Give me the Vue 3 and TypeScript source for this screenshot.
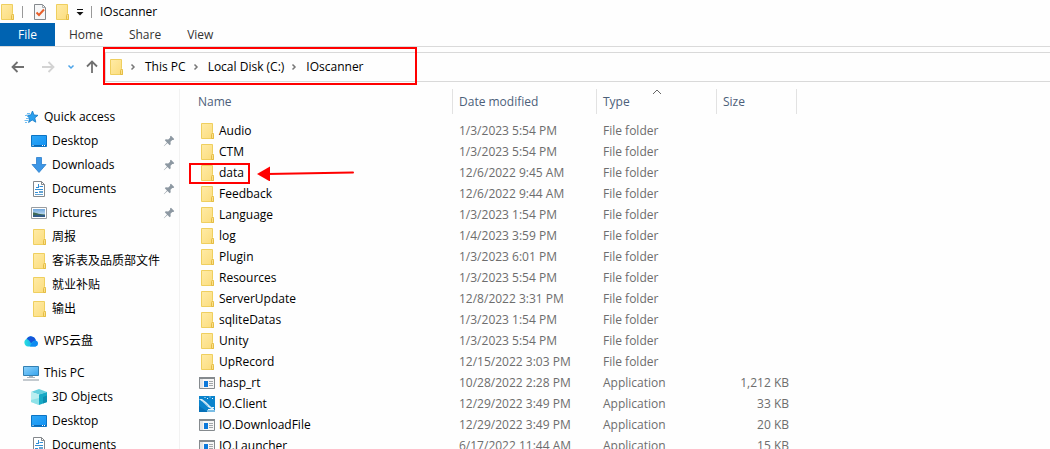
<script setup lang="ts">
interface SideItem {
  label: string
  icon: string
  level: 1 | 2
  pinned?: boolean
  gap?: boolean
}

interface FileRow {
  name: string
  date: string
  type: string
  size?: string
  icon: string
  marked?: boolean
}

const tabs: string[] = ['Home', 'Share', 'View']
const crumbs: string[] = ['This PC', 'Local Disk (C:)', 'IOscanner']

const sideItems: SideItem[] = [
  { label: 'Quick access', icon: 'star', level: 1 },
  { label: 'Desktop', icon: 'desktop', level: 2, pinned: true },
  { label: 'Downloads', icon: 'download', level: 2, pinned: true },
  { label: 'Documents', icon: 'document', level: 2, pinned: true },
  { label: 'Pictures', icon: 'picture', level: 2, pinned: true },
  { label: '周报', icon: 'folder', level: 2 },
  { label: '客诉表及品质部文件', icon: 'folder', level: 2 },
  { label: '就业补贴', icon: 'folder', level: 2 },
  { label: '输出', icon: 'folder', level: 2 },
  { label: 'WPS云盘', icon: 'cloud', level: 1, gap: true },
  { label: 'This PC', icon: 'pc', level: 1, gap: true },
  { label: '3D Objects', icon: 'cube', level: 2 },
  { label: 'Desktop', icon: 'desktop', level: 2 },
  { label: 'Documents', icon: 'document', level: 2 },
]

const folder = (name: string, date: string, marked = false): FileRow => ({
  name,
  date,
  type: 'File folder',
  icon: 'folder',
  marked,
})

const program = (name: string, date: string, size: string, icon = 'program'): FileRow => ({
  name,
  date,
  type: 'Application',
  size,
  icon,
})

const files: FileRow[] = [
  folder('Audio', '1/3/2023 5:54 PM'),
  folder('CTM', '1/3/2023 5:54 PM'),
  folder('data', '12/6/2022 9:45 AM', true),
  folder('Feedback', '12/6/2022 9:44 AM'),
  folder('Language', '1/3/2023 1:54 PM'),
  folder('log', '1/4/2023 3:59 PM'),
  folder('Plugin', '1/3/2023 6:01 PM'),
  folder('Resources', '1/3/2023 5:54 PM'),
  folder('ServerUpdate', '12/8/2022 3:31 PM'),
  folder('sqliteDatas', '1/3/2023 1:54 PM'),
  folder('Unity', '1/3/2023 5:54 PM'),
  folder('UpRecord', '12/15/2022 3:03 PM'),
  program('hasp_rt', '10/28/2022 2:28 PM', '1,212 KB'),
  program('IO.Client', '12/29/2022 3:49 PM', '33 KB', 'scanner'),
  program('IO.DownloadFile', '12/29/2022 3:49 PM', '20 KB'),
  program('IO.Launcher', '6/17/2022 11:44 AM', '15 KB'),
]
</script>

<template>
  <div class="explorer">
    <svg class="sprite" aria-hidden="true">
      <defs>
        <linearGradient id="g-folder" x1="0" y1="0" x2="1" y2="1">
          <stop offset="0" stop-color="#ffeba6" />
          <stop offset="1" stop-color="#fbdc7c" />
        </linearGradient>
        <linearGradient id="g-blue" x1="0" y1="0" x2="1" y2="1">
          <stop offset="0" stop-color="#2fa8f7" />
          <stop offset="1" stop-color="#1292f4" />
        </linearGradient>
        <linearGradient id="g-pc" x1="0" y1="0" x2="1" y2="1">
          <stop offset="0" stop-color="#8fd2fb" />
          <stop offset="1" stop-color="#35a4ee" />
        </linearGradient>
        <linearGradient id="g-sky" x1="0" y1="0" x2="0" y2="1">
          <stop offset="0" stop-color="#6fa6dc" />
          <stop offset="1" stop-color="#e3f1fa" />
        </linearGradient>
        <linearGradient id="g-cloud" x1="0" y1="0" x2="1" y2="0">
          <stop offset="0" stop-color="#27dfe0" />
          <stop offset="1" stop-color="#128ef5" />
        </linearGradient>
      </defs>
      <symbol id="folder" viewBox="0 0 16 16">
        <path d="M2.5.5h11v9l1 1v5h-12z" fill="url(#g-folder)" stroke="#efcf5f" />
        <path d="M12.500 15.500v-4l1-1.500 1 1.500v4z" fill="#fbe08a" stroke="#e5bd45" />
      </symbol>
      <symbol id="check-doc" viewBox="0 0 16 16">
        <path d="M2.500.5h8l3 3v12h-11z" fill="#f6f7f8" stroke="#85898d" />
        <path d="M10.500.5v3h3" fill="none" stroke="#a5a9ad" />
        <path d="M4.500 8.500 7 11l5-5.500" fill="none" stroke="#e8602c" stroke-width="2" />
      </symbol>
      <symbol id="star" viewBox="0 0 16 16">
        <path d="m9.500 2 1.500 4 4 .3-3.200 2.600 1 4.300-3.600-2.200-3.600 2.500 1-4.300L3.700 6.300l4-.3z" fill="#2ba0ee" stroke="#1478c4" stroke-width=".8" />
        <path d="M4 4.500h3M2 6.500h3M3 9.500h3M1.500 11.500H5M2 13.500h2" stroke="#6fbdf2" />
      </symbol>
      <symbol id="desktop" viewBox="0 0 16 16">
        <path d="M.5 2.500h15v11H.5z" fill="url(#g-blue)" stroke="#0c74c4" />
        <path d="M1 12.500h14" stroke="#0b66b3" />
        <path d="M1.500 12.500h1M11 12.500h1M13 12.500h1" stroke="#fff" />
      </symbol>
      <symbol id="download" viewBox="0 0 16 16">
        <path d="M5.500.5h5v7h4.500L8 15.500 1 7.500h4.500z" fill="#3c96e6" stroke="#2a7dcc" stroke-width=".8" />
      </symbol>
      <symbol id="document" viewBox="0 0 16 16">
        <path d="M2.500.5h8l3 3v12h-11z" fill="#fff" stroke="#84888c" />
        <path d="M10.500.5v3h3" fill="none" stroke="#84888c" />
        <path d="M5 6.500h2M7.500 3v4M8.500 5.500H12M4 8.500h8M4 11.500h3" stroke="#338ed4" />
        <path d="M8 10h4v2H8zM4 13h8v1H4z" fill="#65a4d3" />
      </symbol>
      <symbol id="picture" viewBox="0 0 16 16">
        <path d="M.5 2.500h15v11H.5z" fill="#fff" stroke="#989ca0" />
        <path d="M2 4h12v8H2z" fill="url(#g-sky)" />
        <path d="M2 7.500c3 0 4 1.500 12 2V12H2z" fill="#3e6956" />
        <path d="M2 10.500c4-1 8 0 12-.5v2H2z" fill="#315a88" />
      </symbol>
      <symbol id="cloud" viewBox="0 0 16 16">
        <path d="M5 13.500a4 4 0 0 1-1.500-7.500 5 5 0 0 1 9.300 1.400 3.200 3.200 0 0 1-.3 6.100z" fill="url(#g-cloud)" />
        <path d="M3.500 6a5 5 0 0 1 9.300 1.400C10.500 7.500 9 8.800 8 10.500 7 8 5.500 6.200 3.500 6z" fill="#1554d9" />
        <path d="M7 13.500c1-3 3-5.500 5.800-6.100a3.200 3.200 0 0 1-.3 6.100z" fill="#0d8bf1" />
      </symbol>
      <symbol id="pc" viewBox="0 0 16 16">
        <path d="M.5 1.500h15v9H.5z" fill="url(#g-pc)" stroke="#3380b2" />
        <path d="M4 12.500h8M6 11.500h4" stroke="#a8b4bd" />
        <path d="M0 15h16" stroke="#8a969f" />
      </symbol>
      <symbol id="cube" viewBox="0 0 16 16">
        <path d="M8 0 16 3 8 5.500 0 3z" fill="#65d0de" />
        <path d="m0 3 8 2.500V16l-8-3z" fill="#b9eef0" />
        <path d="m16 3-8 2.500V16l8-3z" fill="#16a9c5" />
        <path d="m0 11 8-2V16l-8-3z" fill="#8fe2e8" />
        <path d="m12 8 4-1.500V13l-4 1.500z" fill="#0c8eb0" />
      </symbol>
      <symbol id="program" viewBox="0 0 16 16">
        <path d="M.5 2.500h15v11H.5z" fill="#f6f6f6" stroke="#858a8e" />
        <path d="M0 2h16v2H0z" fill="#858a8e" />
        <path d="M1 4h3v9H1z" fill="#e3e5e6" />
        <path d="M5 6h4v6H5z" fill="#0b78da" />
        <path d="M10 6.500h4M10 8.500h4M10 10.500h4" stroke="#a2a6a9" />
      </symbol>
      <symbol id="scanner" viewBox="0 0 16 16">
        <path d="M0 0h16v16H0z" fill="#0a83cc" />
        <path d="M0 10 9 16H0z" fill="#0670b7" />
        <path d="M0 3l3 0 4 3 4 4 4 3-1 1-5-3-4-4z" fill="#d9edf8" />
        <path d="m3 5 6 5" stroke="#8cc5e6" />
        <path d="M5.500 1.500h1M8 2.500h1M10.500 1h1M13 2.500h1M9 13.500h6M8 15h8M13 11.500h2" stroke="#eaf6fc" />
      </symbol>
      <symbol id="pin" viewBox="0 0 12 12">
        <path d="M7 1.500 8 .8l3.200 3.200-.7 1-1.200-.1-1.800 1.900.2 2.500-1 .9-2.200-2.200L1 11.200.8 11l3.200-3.500L1.800 5.300l.9-1 2.500.2L7.100 2.700z" fill="#8d98a2" />
      </symbol>
      <symbol id="chevron" viewBox="0 0 8 8">
        <path d="m2.500 1.500 2.500 2.500-2.500 2.500" fill="none" stroke="#777" stroke-width="1.500" />
      </symbol>
      <symbol id="arrow" viewBox="0 0 14 14">
        <path d="M13 7H2M6.500 2 1.500 7l5 5" fill="none" stroke="currentColor" stroke-width="1.800" />
      </symbol>
    </svg>

    <header class="title-bar">
      <svg class="icon"><use href="#folder" /></svg>
      <span class="separator first"></span>
      <button class="tool" aria-label="Properties"><svg class="icon"><use href="#check-doc" /></svg></button>
      <button class="tool" aria-label="New folder"><svg class="icon"><use href="#folder" /></svg></button>
      <button class="tool" aria-label="Customize Quick Access Toolbar">
        <svg width="8" height="8" viewBox="0 0 8 8"><path d="M1 1.500h6" stroke="#111" /><path d="M.5 4h7L4 7.500z" fill="#111" /></svg>
      </button>
      <span class="separator"></span>
      <span class="title">IOscanner</span>
    </header>

    <nav class="ribbon" aria-label="Ribbon">
      <button class="tab file">File</button>
      <button v-for="tab in tabs" :key="tab" class="tab">{{ tab }}</button>
    </nav>

    <div class="navigation">
      <div class="history">
        <button class="tool" aria-label="Back"><svg class="arrow"><use href="#arrow" /></svg></button>
        <button class="tool forward" aria-label="Forward"><svg class="arrow flip"><use href="#arrow" /></svg></button>
        <button class="tool recent" aria-label="Recent locations">
          <svg width="8" height="8" viewBox="0 0 8 8"><path d="m1.500 2.500 2.500 2.500 2.500-2.500" fill="none" stroke="#4ba3e8" stroke-width="1.500" /></svg>
        </button>
        <button class="tool up" aria-label="Up"><svg class="arrow turn"><use href="#arrow" /></svg></button>
      </div>
      <div class="address">
        <svg class="icon"><use href="#folder" /></svg>
        <template v-for="crumb in crumbs" :key="crumb">
          <svg class="chevron"><use href="#chevron" /></svg>
          <button class="crumb">{{ crumb }}</button>
        </template>
      </div>
      <div class="address-mark"></div>
    </div>

    <main class="content">
      <aside class="sidebar">
        <ul>
          <li v-for="(item, i) in sideItems" :key="i" :class="['level-' + item.level, item.icon, { gap: item.gap }]">
            <svg class="icon"><use :href="'#' + item.icon" /></svg>
            <a href="#">{{ item.label }}</a>
            <svg v-if="item.pinned" class="pin"><use href="#pin" /></svg>
          </li>
        </ul>
      </aside>

      <table class="files">
        <colgroup>
          <col class="col-name" />
          <col class="col-date" />
          <col class="col-type" />
          <col class="col-size" />
        </colgroup>
        <thead>
          <tr>
            <th>Name</th>
            <th>Date modified</th>
            <th aria-sort="ascending">
              Type
              <svg class="sort" width="10" height="6" viewBox="0 0 10 6"><path d="M1 5l4-4 4 4" fill="none" stroke="#666" /></svg>
            </th>
            <th>Size</th>
          </tr>
        </thead>
        <tbody>
          <tr v-for="file in files" :key="file.name">
            <td class="name">
              <div class="entry">
                <svg class="icon"><use :href="'#' + file.icon" /></svg>
                <span>{{ file.name }}</span>
                <template v-if="file.marked">
                  <span class="row-mark"></span>
                  <svg class="pointer" width="98" height="16" viewBox="0 0 98 16">
                    <path d="M10 9 96 7.500" stroke="#f00" stroke-width="2" stroke-linecap="round" />
                    <path d="M0 9 13 1.500v15z" fill="#f00" />
                  </svg>
                </template>
              </div>
            </td>
            <td>{{ file.date }}</td>
            <td>{{ file.type }}</td>
            <td class="size">{{ file.size }}</td>
          </tr>
        </tbody>
      </table>
    </main>
  </div>
</template>

<style>
body {
  margin: 0;
  overflow: hidden;
  background: #fefefe;
}
</style>

<style scoped>
.explorer {
  height: 100vh;
  display: flex;
  flex-direction: column;
  overflow: hidden;
  background: #fefefe;
  color: #000;
  font: 12px/20px "Segoe UI", "Open Sans", "Noto Sans CJK SC", sans-serif;
}

.sprite {
  position: absolute;
  width: 0;
  height: 0;
}

button {
  padding: 0;
  border: 0;
  background: none;
  color: inherit;
  font: inherit;
}

svg {
  display: block;
  flex: none;
}

.icon {
  width: 16px;
  height: 16px;
}

.title-bar {
  display: flex;
  align-items: center;
  flex: none;
  height: 23px;
}

.title-bar > .icon {
  margin-left: -1px;
}

.separator {
  width: 1px;
  height: 12px;
  margin: 0 8px 0 7px;
  background: #999;
}

.separator.first {
  margin-right: 9px;
}

.title-bar .tool + .tool {
  margin-left: 6px;
}

.ribbon {
  display: flex;
  flex: none;
  height: 23px;
  border-bottom: 1px solid #dadada;
}

.tab {
  padding: 0 12px 0 14px;
  color: #333;
}

.tab.file {
  width: 55px;
  padding: 0;
  background: #0063b1;
  color: #fff;
}

.navigation {
  position: relative;
  display: flex;
  flex: none;
  padding-top: 5px;
}

.history {
  display: flex;
  align-items: center;
  width: 105px;
  box-sizing: border-box;
  padding-left: 11px;
  color: #707070;
}

.arrow {
  width: 14px;
  height: 14px;
}

.flip {
  transform: rotate(180deg);
}

.turn {
  transform: rotate(90deg);
}

.forward {
  margin-left: 16px;
  color: #d3d3d3;
}

.recent {
  margin-left: 12px;
}

.up {
  margin-left: 10px;
}

.address {
  display: flex;
  align-items: center;
  flex: 1;
  height: 28px;
  padding-left: 2px;
  border: 1px solid #d9d9d9;
  border-right: 0;
}

.chevron {
  width: 8px;
  height: 8px;
  margin: 0 4px 0 5px;
}

.crumb {
  padding: 0 1px 0 4px;
  white-space: nowrap;
}

.address-mark {
  position: absolute;
  top: 0;
  left: 103px;
  width: 310px;
  height: 34px;
  border: 2px solid #f00;
}

.content {
  display: flex;
  flex: 1;
  min-height: 0;
  padding-top: 7px;
  overflow: hidden;
}

.sidebar {
  flex: none;
  width: 179px;
  border-right: 1px solid #f2f2f2;
}

ul {
  margin: 0;
  padding: 16px 0 0;
  list-style: none;
}

li {
  display: flex;
  align-items: center;
  height: 24px;
  padding-right: 4px;
}

li.level-1 {
  padding-left: 23px;
}

li.level-2 {
  padding-left: 31px;
}

li.gap {
  margin-top: 8px;
}

li a {
  flex: 1;
  margin-left: 5px;
  color: inherit;
  text-decoration: none;
  white-space: nowrap;
}

.pin {
  width: 12px;
  height: 12px;
}

.files {
  align-self: flex-start;
  table-layout: fixed;
  width: 617px;
  border-collapse: separate;
  border-spacing: 0;
  color: #6d6d6d;
}

.col-name {
  width: 273px;
}

.col-date {
  width: 144px;
}

.col-type {
  width: 120px;
}

.col-size {
  width: 80px;
}

th {
  position: relative;
  height: 25px;
  padding: 0 6px;
  border-right: 1px solid #e2e2e2;
  color: #4c607a;
  font-weight: 400;
  text-align: left;
}

th:first-child {
  padding-left: 18px;
}

.sort {
  position: absolute;
  top: 0;
  left: 55px;
}

tbody::before {
  content: "";
  display: block;
  height: 6px;
}

td {
  height: 21px;
  padding: 0 6px;
  white-space: nowrap;
}

td.name {
  padding: 0 0 0 19px;
  color: #000;
}

.entry {
  position: relative;
  display: flex;
  align-items: center;
  gap: 4px;
}

.size {
  padding-right: 8px;
  text-align: right;
}

.row-mark {
  position: absolute;
  top: 0;
  left: -10px;
  width: 57px;
  height: 17px;
  border: 2px solid #f00;
}

.pointer {
  position: absolute;
  top: 2px;
  left: 58px;
}
</style>
